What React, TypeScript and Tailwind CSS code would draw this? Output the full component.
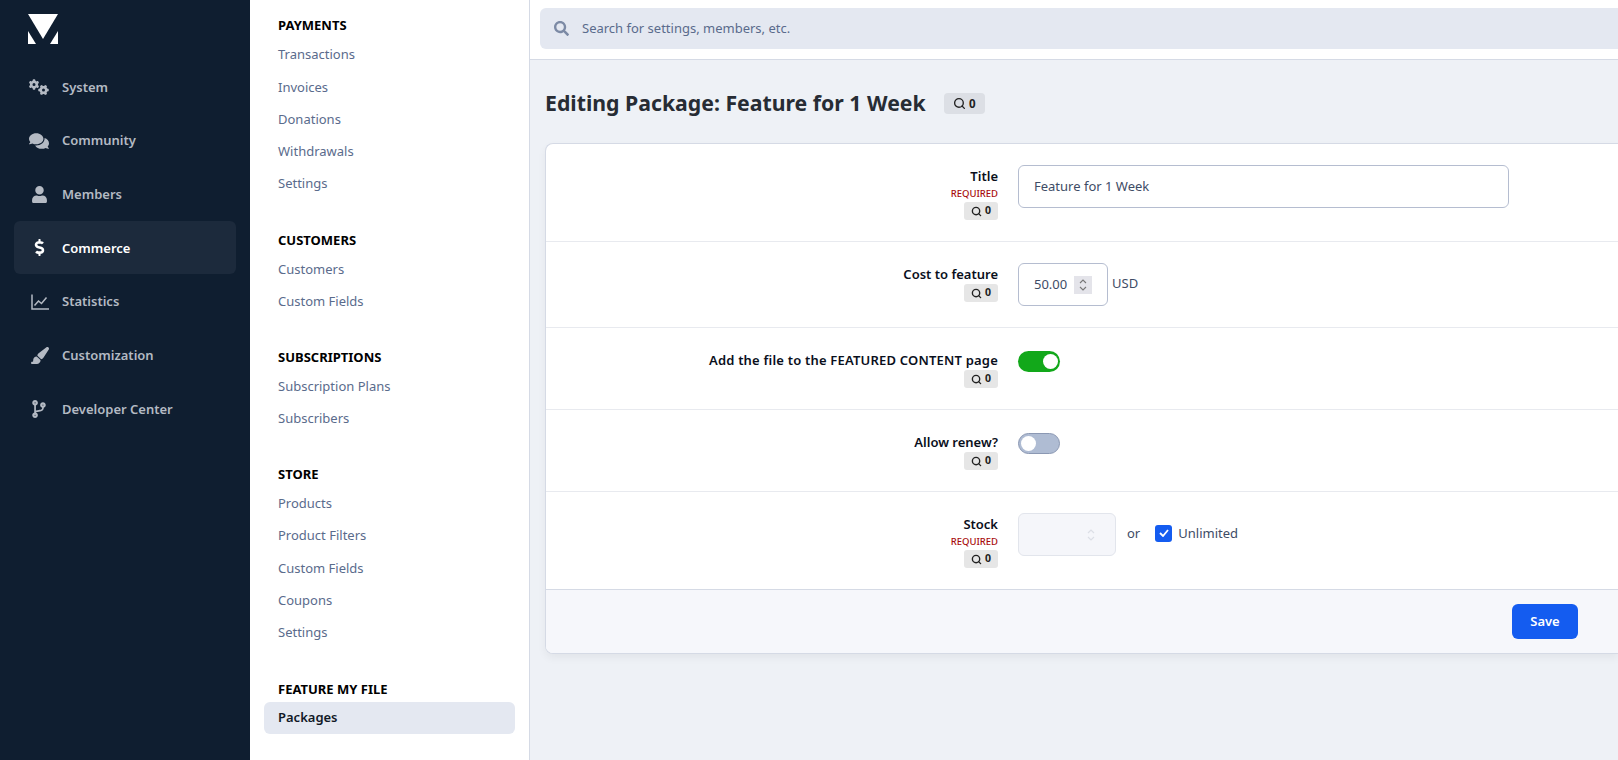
import React from "react";
import { Search } from "lucide-react";
import { FaComments, FaUser, FaDollarSign, FaCodeBranch, FaSearch } from "react-icons/fa";
import { FaGears, FaPaintbrush } from "react-icons/fa6";

const font = "font-['Noto_Sans',sans-serif]";

function ChartIcon({ size }: { size: number }) {
  return (
    <svg className="ml-[1px]" width={size} height={size} viewBox="0 0 18 18" fill="none" stroke="currentColor" strokeWidth="1.5">
      <path d="M1 1.5V16H18" />
      <path d="M3.5 12.5L7.5 8L10.5 10.5L15.5 4.5" />
    </svg>
  );
}

const mainNav: { label: string; Icon: any; size: number; active?: boolean }[] = [
  { label: "System", Icon: FaGears, size: 22 },
  { label: "Community", Icon: FaComments, size: 22 },
  { label: "Members", Icon: FaUser, size: 17 },
  { label: "Commerce", Icon: FaDollarSign, size: 17, active: true },
  { label: "Statistics", Icon: ChartIcon, size: 18 },
  { label: "Customization", Icon: FaPaintbrush, size: 19 },
  { label: "Developer Center", Icon: FaCodeBranch, size: 18 },
];

const groups = [
  { title: "PAYMENTS", mb: "mb-[29.5px]", items: ["Transactions", "Invoices", "Donations", "Withdrawals", "Settings"] },
  { title: "CUSTOMERS", mb: "mb-[28.5px]", items: ["Customers", "Custom Fields"] },
  { title: "SUBSCRIPTIONS", mb: "mb-[28.5px]", items: ["Subscription Plans", "Subscribers"] },
  { title: "STORE", mb: "mb-[29.5px]", items: ["Products", "Product Filters", "Custom Fields", "Coupons", "Settings"] },
];

function Badge() {
  return (
    <span className="inline-flex h-[18px] w-[34px] items-center justify-center gap-[3px] rounded-[3px] bg-[#e6e6e6] text-[10.5px] font-bold text-[#222]">
      <Search size={11} strokeWidth={3} />0
    </span>
  );
}

function Label({ text, required, wide }: { text: string; required?: boolean; wide?: boolean }) {
  return (
    <div className="mt-[1px] flex w-[452px] shrink-0 flex-col items-end">
      <div className={`text-[13px] leading-[20px] font-semibold text-[#0a0f1c] ${wide ? "tracking-[0.2px]" : ""}`}>{text}</div>
      {required && <div className="mt-[2px] mb-[2px] text-[9.5px] leading-[12px] font-medium text-[#a80c0c]">REQUIRED</div>}
      <Badge />
    </div>
  );
}

export default function App() {
  return (
    <div className={`flex h-[760px] w-[1618px] overflow-hidden bg-[#eef1f6] ${font}`}>
      <aside className="flex w-[250px] shrink-0 flex-col bg-[#0f1e30] px-[14px]">
        <svg className="mt-[14px] ml-[14px] h-[30px] w-[30px]" viewBox="0 0 30 30">
          <path d="M0 0H30L15 25Z" fill="#fff" />
          <path d="M0 17L8 30H0Z" fill="#fff" />
          <path d="M30 17L22 30H30Z" fill="#fff" />
        </svg>
        <nav className="mt-[16.5px] flex flex-col gap-[0.67px]">
          {mainNav.map(({ label, Icon, size, active }) => (
            <div
              key={label}
              className={`flex h-[53px] items-center rounded-[6px] pl-[15px] text-[13px] font-semibold ${active ? "bg-[#1c2a3c] text-white" : "text-[#b4bac3]"}`}
            >
              <span className="flex w-[20px] justify-center">
                <Icon size={size} />
              </span>
              <span className="ml-[13px] pt-[1px]">{label}</span>
            </div>
          ))}
        </nav>
      </aside>

      <aside className="flex w-[280px] shrink-0 flex-col border-r border-[#d5dae5] bg-white px-[14px] pt-[15px]">
        {groups.map((g) => (
          <div key={g.title} className={g.mb}>
            <div className="mb-[4px] pl-[14px] text-[13px] leading-[20px] font-bold text-black">{g.title}</div>
            {g.items.map((i) => (
              <div key={i} className="flex h-[32.25px] items-center pl-[14px] text-[13px] text-[#5a6b8c]">{i}</div>
            ))}
          </div>
        ))}
        <div className="mb-[3px] pl-[14px] text-[13px] leading-[20px] font-bold text-black">FEATURE MY FILE</div>
        <div className="flex h-[32px] items-center rounded-[6px] bg-[#e4e8f1] pl-[14px] text-[13px] font-semibold text-[#111827]">Packages</div>
      </aside>

      <main className="flex min-w-0 flex-1 flex-col">
        <div className="h-[60px] shrink-0 border-b border-[#d5dae5] bg-white pt-[8px] pl-[10px]">
          <div className="flex h-[41px] items-center rounded-l-[6px] bg-[#e4e8f1] pl-[14px] text-[13px] text-[#5a6b8c]">
            <FaSearch size={15} className="text-[#7c8aa5]" />
            <span className="ml-[13px] pt-[1px]">Search for settings, members, etc.</span>
          </div>
        </div>
        <div className="pl-[15px]">
          <div className="flex h-[83px] items-center pt-[2px]">
            <h1 className="text-[21.25px] font-bold text-[#272c34]">Editing Package: Feature for 1 Week</h1>
            <span className="mt-[2px] ml-[18px] inline-flex h-[21px] w-[41px] items-center justify-center gap-[3px] rounded-[4px] bg-[#dcdfe5] text-[11.5px] font-bold text-[#222]">
              <Search size={13} strokeWidth={2.5} />0
            </span>
          </div>
          <div className="overflow-hidden rounded-l-[8px] border border-r-0 border-[#d5dae5] bg-white shadow-[0_4px_8px_rgba(0,0,0,0.05)]">
            <div className="flex h-[98px] gap-[20px] border-b border-[#e8eaef] pt-[21px]">
              <Label text="Title" required />
              <div className="flex h-[43px] w-[491px] items-center rounded-[6px] border border-[#b5bdd0] pt-[1px] pl-[15px] text-[13px] text-[#3e4c66]">Feature for 1 Week</div>
            </div>
            <div className="flex h-[86px] gap-[20px] border-b border-[#e8eaef] pt-[21px]">
              <Label text="Cost to feature" />
              <div className="flex h-[43px] items-center">
                <div className="flex h-[43px] w-[90px] items-center rounded-[6px] border border-[#b5bdd0] pl-[15px] text-[13px] text-[#3e4c66]">
                  50.00
                  <span className="ml-[7px] flex h-[18px] w-[18px] flex-col items-center justify-center bg-[#e4e4ea]">
                    <svg width="8" height="14" viewBox="0 0 8 14" fill="none" stroke="#777" strokeWidth="1.1">
                      <path d="M1 5L4 2L7 5M1 9L4 12L7 9" />
                    </svg>
                  </span>
                </div>
                <span className="mb-[2px] ml-[4px] text-[13px] text-[#3e4c66]">USD</span>
              </div>
            </div>
            <div className="flex h-[82px] gap-[20px] border-b border-[#e8eaef] pt-[21px]">
              <Label text="Add the file to the FEATURED CONTENT page" wide />
              <div className="mt-[2px] flex h-[21px] w-[42px] items-center justify-end rounded-full bg-[#12a81a] pr-[2px]">
                <span className="h-[15px] w-[15px] rounded-full bg-white" />
              </div>
            </div>
            <div className="flex h-[82px] gap-[20px] border-b border-[#e8eaef] pt-[21px]">
              <Label text="Allow renew?" />
              <div className="mt-[2px] flex h-[21px] w-[42px] items-center rounded-full border border-[#8b98b3] bg-[#afbcd3] pl-[2px]">
                <span className="h-[15px] w-[15px] rounded-full bg-white" />
              </div>
            </div>
            <div className="flex h-[98px] gap-[20px] border-b border-[#d5dae5] pt-[21px]">
              <Label text="Stock" required />
              <div className="flex h-[43px] items-center">
                <div className="flex h-[43px] w-[98px] items-center justify-end rounded-[6px] border border-[#e2e5ec] bg-[#f5f6fa] pr-[20px]">
                  <svg width="8" height="14" viewBox="0 0 8 14" fill="none" stroke="#dcdfe6" strokeWidth="1.2">
                    <path d="M1 5L4 2L7 5M1 9L4 12L7 9" />
                  </svg>
                </div>
                <span className="mb-[2px] ml-[11px] text-[13px] text-[#3e4c66]">or</span>
                <span className="mb-[3px] ml-[15px] flex h-[17px] w-[17px] items-center justify-center rounded-[3px] bg-[#145cf0]">
                  <svg width="10" height="8" viewBox="0 0 10 8" fill="none" stroke="#fff" strokeWidth="1.8">
                    <path d="M1 4L4 7L9 1" />
                  </svg>
                </span>
                <span className="mb-[2px] ml-[6px] text-[13px] text-[#3e4c66]">Unlimited</span>
              </div>
            </div>
            <div className="flex h-[63px] items-center bg-[#f6f7fb]">
              <button className="ml-[966px] h-[35px] w-[66px] rounded-[6px] bg-[#145cf0] text-[13px] font-semibold text-white">Save</button>
            </div>
          </div>
        </div>
      </main>
    </div>
  );
}
